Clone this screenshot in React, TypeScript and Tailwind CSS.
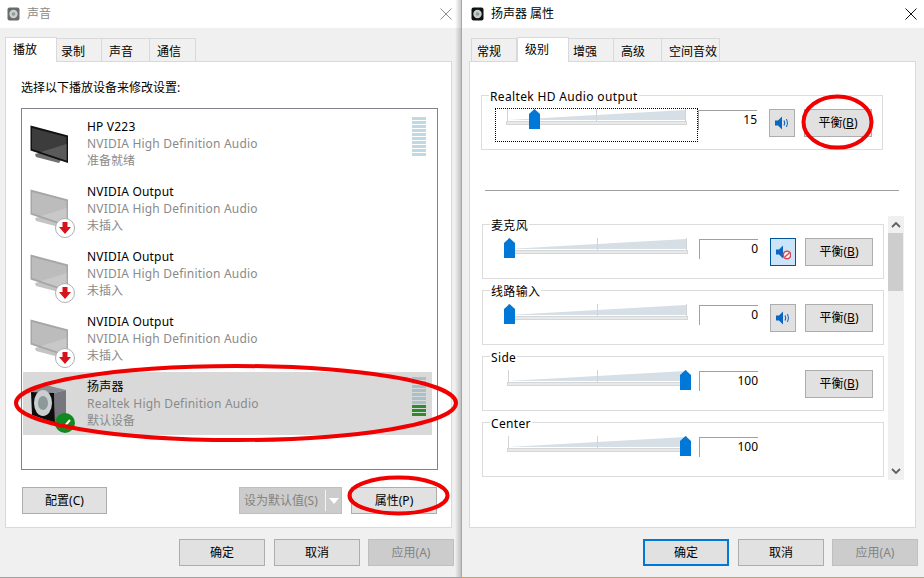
function Btn({
  children,
  className = "",
  disabled = false,
}: {
  children: React.ReactNode;
  className?: string;
  disabled?: boolean;
}) {
  return (
    <div
      className={`flex items-center justify-center border text-[12px] leading-none ${
        disabled
          ? "bg-[#cccccc] border-[#bfbfbf] text-[#838383]"
          : "bg-[#e1e1e1] border-[#adadad] text-black"
      } ${className}`}
    >
      {children}
    </div>
  );
}

function Tabs({
  items,
  active,
  className = "",
}: {
  items: { name: string; w: number; pl: number }[];
  active: number;
  className?: string;
}) {
  return (
    <div className={`relative z-10 flex items-end h-[25px] -mb-px ${className}`}>
      {items.map((t, i) => (
        <div
          key={t.name}
          style={{ width: t.w, paddingLeft: t.pl }}
          className={
            i === active
              ? "h-[25px] bg-white border border-b-0 border-[#d9d9d9] pt-[3px] text-[12px] leading-[17px]"
              : "h-[23px] mb-px bg-[#f0f0f0] border border-b-0 border-l-0 first:border-l border-[#d9d9d9] pt-[4px] text-[12px] leading-[17px]"
          }
        >
          {t.name}
        </div>
      ))}
    </div>
  );
}

function Monitor({ off }: { off?: boolean }) {
  const top = off ? 12 : 13;
  return (
    <svg width="64" height="63" className="shrink-0">
      <g transform={`translate(0 ${top})`}>
        <polygon points="12,29 24,26 38,35 36,38 13,32" fill={off ? "#c4c4c4" : "#707070"} />
        <polygon
          points="7.5,0.5 45,10.5 45,38 7.5,25.5"
          fill={off ? "#a6a6a6" : "#111111"}
        />
        <polygon points="9,3 43.5,12 43.5,35.5 9,24" fill={off ? "#bcbcbc" : "#3c3c3c"} />
        <polygon points="18,27 43.5,19 43.5,35.5" fill={off ? "#c8c8c8" : "#5a5a5a"} />
      </g>
      {off && (
        <g>
          <circle cx="42" cy="51" r="9.5" fill="#ffffff" stroke="#b0b0b0" strokeWidth="1" />
          <polygon points="39.5,45 44.5,45 44.5,50 48,50 42,57 36,50 39.5,50" fill="#d8121a" />
        </g>
      )}
    </svg>
  );
}

function SpeakerIcon() {
  return (
    <svg width="64" height="63" className="shrink-0">
      <polygon points="8,20 19,12 43,18 31,21" fill="#8c8c94" />
      <polygon points="31,21 43,18 43,45 32,51" fill="#76767e" />
      <polygon points="8,20 31,21 32,51 9,43" fill="#0c0c0c" />
      <ellipse cx="20" cy="31" rx="9" ry="13" fill="#c9cfcf" />
      <ellipse cx="20" cy="31" rx="5" ry="7" fill="#8f9898" />
      <circle cx="42" cy="51" r="10" fill="#0f8a1f" />
      <path d="M37 52 L41 55 L47 48" fill="none" stroke="#ffffff" strokeWidth="2" />
    </svg>
  );
}

function Meter({ green = 0, dim }: { green?: number; dim?: boolean }) {
  return (
    <div className="absolute right-[6px] top-[5px] flex flex-col gap-px w-[14px]">
      {Array.from({ length: 10 }).map((_, i) => (
        <div
          key={i}
          className={`h-[3px] ${
            i >= 10 - green ? "bg-[#2e8b2e]" : dim ? "bg-[#a8c0c8]" : "bg-[#c0dae3]"
          }`}
        />
      ))}
    </div>
  );
}

function DeviceRow({
  name,
  sub,
  status,
  icon,
  selected,
  meter,
}: {
  name: string;
  sub: string;
  status: string;
  icon: React.ReactNode;
  selected?: boolean;
  meter?: React.ReactNode;
}) {
  return (
    <div className={`relative flex h-[63px] mb-[2px] ${selected ? "bg-[#d9d9d9]" : ""}`}>
      {icon}
      <div className="pt-[6px] text-[12px] leading-[17px]">
        <div className="text-black tracking-[0.2px]">{name}</div>
        <div className="text-[#8a8a8a] tracking-[0.2px]">{sub}</div>
        <div className="text-[#8a8a8a]">{status}</div>
      </div>
      {meter}
    </div>
  );
}

function Slider({ thumb }: { thumb: number }) {
  return (
    <svg width="192" height="26" className="shrink-0">
      <polygon points="8,13 186,3 186,13" fill="#d6dfe6" />
      <line x1="8.5" y1="2" x2="8.5" y2="14" stroke="#d4d4d4" />
      <line x1="97.5" y1="2" x2="97.5" y2="14" stroke="#d4d4d4" />
      <line x1="186.5" y1="2" x2="186.5" y2="14" stroke="#d4d4d4" />
      <rect x="7.5" y="14.5" width="180" height="3" fill="#e7eaea" stroke="#d6d6d6" />
      <polygon
        points={`${thumb},7 ${thumb + 5.5},2 ${thumb + 11},7 ${thumb + 11},22 ${thumb},22`}
        fill="#0078d7"
      />
    </svg>
  );
}

function VolumeIcon({ muted }: { muted?: boolean }) {
  return (
    <svg width="16" height="16" viewBox="0 0 16 16">
      <polygon points="1,5.5 4,5.5 8,1.5 8,14.5 4,10.5 1,10.5" fill="#0a66c2" />
      {muted ? (
        <g>
          <circle cx="12" cy="11" r="3.7" fill="#ffffff" stroke="#d9434e" strokeWidth="1.6" />
          <line x1="9.8" y1="13" x2="14.2" y2="9" stroke="#d9434e" strokeWidth="1.4" />
        </g>
      ) : (
        <g fill="none" stroke="#0a66c2">
          <path d="M10 5.5 Q11.5 8 10 10.5" strokeWidth="1.2" />
          <path d="M12.5 4 Q14.5 8 12.5 12" strokeWidth="1" />
        </g>
      )}
    </svg>
  );
}

function Group({
  label,
  thumb,
  value,
  mute,
  balance = true,
  focus,
  className = "w-[402px]",
}: {
  label: string;
  thumb: number;
  value: number;
  mute?: "on" | "off";
  balance?: boolean;
  focus?: boolean;
  className?: string;
}) {
  return (
    <div className={`relative h-[55px] shrink-0 border border-[#dcdcdc] bg-white ${className}`}>
      <div className="absolute left-[7px] -top-[7px] bg-white px-[1px] text-[12px] leading-[15px] tracking-[0.35px]">
        {label}
      </div>
      {focus && (
        <div className="absolute left-[13px] top-[12px] w-[203px] h-[34px] border border-dotted border-black" />
      )}
      <div className="flex items-start pl-[17px] pt-[11px]">
        <Slider thumb={thumb} />
        <div className="ml-[7px] mt-[3px] w-[59px] h-[20px] border-l border-t border-[#a0a0a0] text-right text-[12px] leading-[17px]">
          {value}
        </div>
        {mute && (
          <div
            className={`ml-[12px] mt-[2px] w-[26px] h-[28px] flex items-center justify-center border ${
              mute === "on" ? "bg-[#cce4f7] border-[#005499]" : "bg-[#e1e1e1] border-[#adadad]"
            }`}
          >
            <VolumeIcon muted={mute === "on"} />
          </div>
        )}
        {balance && (
          <Btn className={`${mute ? "ml-[9px]" : "ml-[47px]"} mt-[2px] w-[68px] h-[28px]`}>
            <span>
              平衡(<u>B</u>)
            </span>
          </Btn>
        )}
      </div>
    </div>
  );
}

function TitleBar({ title, dim, className = "" }: { title: string; dim?: boolean; className?: string }) {
  return (
    <div className={`flex items-center h-[28px] bg-white shrink-0 ${className}`}>
      <svg width="14" height="14" viewBox="0 0 14 14" className="shrink-0">
        <rect x="0.5" y="0.5" width="12" height="13" rx="2" fill={dim ? "#6a6a6a" : "#111111"} />
        <circle cx="6.5" cy="7" r="4.2" fill="#c9cfcf" />
        <circle cx="6.5" cy="7" r="1.8" fill="#8f9898" />
      </svg>
      <span className={`ml-[6px] text-[12px] ${dim ? "text-[#8a8a8a]" : "text-black"}`}>{title}</span>
      <svg width="12" height="12" viewBox="0 0 12 12" className="ml-auto">
        <path d="M0.5 0.5 L11.5 11.5 M11.5 0.5 L0.5 11.5" stroke={dim ? "#8a8a8a" : "#111111"} strokeWidth="1" fill="none" />
      </svg>
    </div>
  );
}

export default function App() {
  const leftTabs = [
    { name: "播放", w: 52, pl: 7 },
    { name: "录制", w: 45, pl: 4 },
    { name: "声音", w: 48, pl: 7 },
    { name: "通信", w: 46, pl: 7 },
  ];
  const rightTabs = [
    { name: "常规", w: 46, pl: 5 },
    { name: "级别", w: 52, pl: 7 },
    { name: "增强", w: 45, pl: 4 },
    { name: "高级", w: 48, pl: 7 },
    { name: "空间音效", w: 58, pl: 7 },
  ];

  return (
    <div className="relative flex w-[924px] h-[578px] overflow-hidden bg-[#f0f0f0] text-black font-['Noto_Sans','Noto_Sans_CJK_SC',sans-serif]">
      {/* left window */}
      <div className="relative flex flex-col w-[461px] h-full border-b border-[#a0a0a0]">
        <TitleBar title="声音" dim className="pl-[7px] pr-[9px]" />
        <Tabs items={leftTabs} active={0} className="ml-[5px] mt-[9px]" />
        <div className="ml-[5px] mr-[9px] h-[467px] bg-white border border-[#d9d9d9] px-[15px] pt-[17px]">
          <div className="text-[12px] leading-[17px]">选择以下播放设备来修改设置:</div>
          <div className="mt-[12px] h-[362px] w-[417px] border border-[#82828a] pl-px pr-[5px] pt-[3px]">
            <DeviceRow
              name="HP V223"
              sub="NVIDIA High Definition Audio"
              status="准备就绪"
              icon={<Monitor />}
              meter={<Meter />}
            />
            <DeviceRow
              name="NVIDIA Output"
              sub="NVIDIA High Definition Audio"
              status="未插入"
              icon={<Monitor off />}
            />
            <DeviceRow
              name="NVIDIA Output"
              sub="NVIDIA High Definition Audio"
              status="未插入"
              icon={<Monitor off />}
            />
            <DeviceRow
              name="NVIDIA Output"
              sub="NVIDIA High Definition Audio"
              status="未插入"
              icon={<Monitor off />}
            />
            <DeviceRow
              name="扬声器"
              sub="Realtek High Definition Audio"
              status="默认设备"
              icon={<SpeakerIcon />}
              selected
              meter={<Meter green={3} dim />}
            />
          </div>
          <div className="flex items-start mt-[17px] w-[416px] pl-px">
            <Btn className="w-[85px] h-[27px]">配置(C)</Btn>
            <div className="ml-auto flex h-[27px] w-[103px] bg-[#cccccc] border border-[#bfbfbf] text-[#838383] text-[12px] items-center">
              <span className="pl-[4px] w-[85px] whitespace-nowrap">设为默认值(S)</span>
              <div className="h-[21px] w-px bg-[#f4f4f4]" />
              <svg width="12" height="8" viewBox="0 0 12 8" className="ml-[2px]">
                <polygon points="1,1 11,1 6,7" fill="#ffffff" />
              </svg>
            </div>
            <Btn className="ml-[9px] w-[86px] h-[27px]">属性(P)</Btn>
          </div>
        </div>
        <div className="flex mt-[11px] ml-[179px]">
          <Btn className="w-[86px] h-[27px]">确定</Btn>
          <Btn className="ml-[9px] w-[86px] h-[27px]">取消</Btn>
          <Btn disabled className="ml-[8px] w-[86px] h-[27px]">应用(A)</Btn>
        </div>
        <div className="absolute inset-y-0 right-0 w-[6px] bg-gradient-to-r from-transparent to-black/20" />
      </div>

      {/* right window */}
      <div className="relative flex flex-col flex-1 h-full border-l border-b border-[#dd9f45]">
        <TitleBar title="扬声器 属性" className="pl-[9px] pr-[7px]" />
        <Tabs items={rightTabs} active={1} className="ml-[9px] mt-[9px]" />
        <div className="ml-[7px] mr-[8px] h-[467px] bg-white border border-[#d9d9d9] pl-[11px] pt-[33px]">
          <Group label="Realtek HD Audio output" thumb={30} value={15} mute="off" focus />
          <div className="mt-[40px] ml-[4px] w-[414px] h-px bg-[#a0a0a0]" />
          <div className="mt-[25px] ml-px flex h-[264px] overflow-hidden">
            <div className="flex flex-col gap-[11px] pt-[8px]">
              <Group label="麦克风" thumb={4} value={0} mute="on" />
              <Group label="线路输入" thumb={4} value={0} mute="off" />
              <Group label="Side" thumb={180} value={100} />
              <Group label="Center" thumb={180} value={100} balance={false} />
            </div>
            <div className="ml-[4px] w-[16px] h-full bg-[#f0f0f0] flex flex-col">
              <div className="h-[17px] flex items-center justify-center shrink-0">
                <svg width="10" height="7" viewBox="0 0 10 7">
                  <path d="M1 6 L5 2 L9 6" fill="none" stroke="#606060" strokeWidth="1.8" />
                </svg>
              </div>
              <div className="h-[58px] w-[15px] bg-[#cdcdcd]" />
              <div className="mt-auto h-[17px] flex items-center justify-center shrink-0">
                <svg width="10" height="7" viewBox="0 0 10 7">
                  <path d="M1 1 L5 5 L9 1" fill="none" stroke="#606060" strokeWidth="1.8" />
                </svg>
              </div>
            </div>
          </div>
        </div>
        <div className="flex mt-[11px] ml-[181px]">
          <Btn className="w-[86px] h-[27px] border-2 !border-[#0078d7]">确定</Btn>
          <Btn className="ml-[9px] w-[86px] h-[27px]">取消</Btn>
          <Btn disabled className="ml-[8px] w-[86px] h-[27px]">应用(A)</Btn>
        </div>
      </div>

      {/* red marks drawn over the screenshot */}
      <svg width="924" height="578" className="absolute inset-0 pointer-events-none">
        <g fill="none" stroke="#f00000" strokeWidth="4">
          <ellipse cx="236" cy="403" rx="220" ry="37" />
          <ellipse cx="398.5" cy="495.5" rx="49" ry="18" />
          <ellipse cx="837.5" cy="122" rx="34" ry="25.5" />
        </g>
      </svg>
    </div>
  );
}
